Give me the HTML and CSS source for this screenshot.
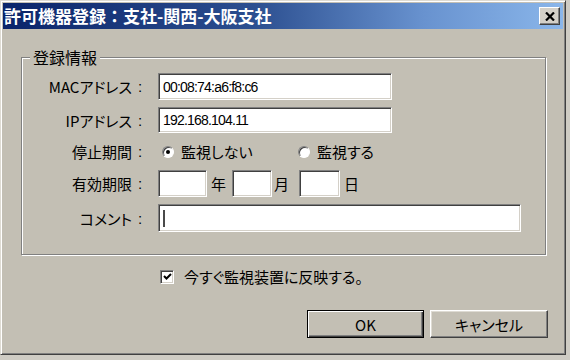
FILE: index.html
```html
<!DOCTYPE html>
<html lang="ja">
<head>
  <meta charset="UTF-8" />
  <title>許可機器登録</title>
  <link rel="stylesheet" href="styles.css">
</head>
<body>
  <div class="window">
    <div class="titlebar">
      <span class="title">許可機器登録：支社-関西-大阪支社</span>
      <button class="close-btn" aria-label="閉じる">
        <svg width="10" height="9" viewBox="0 0 10 9">
          <path d="M1 0.5 L9 8.5 M9 0.5 L1 8.5" stroke="#000" stroke-width="2.2" fill="none"/>
        </svg>
      </button>
    </div>

    <div class="content">
      <fieldset class="group">
        <legend>登録情報</legend>
        <div class="form">
          <div class="label">MACアドレス<span class="colon">:</span></div>
          <div class="field field-mid">00:08:74:a6:f8:c6</div>

          <div class="label">IPアドレス<span class="colon">:</span></div>
          <div class="field field-mid">192.168.104.11</div>

          <div class="label">停止期間<span class="colon">:</span></div>
          <div class="radios">
            <label class="option option-first"><span class="radio checked"></span>監視しない</label>
            <label class="option"><span class="radio"></span>監視する</label>
          </div>

          <div class="label">有効期限<span class="colon">:</span></div>
          <div class="dates">
            <div class="field date-y"></div><span class="unit unit-y">年</span>
            <div class="field date-m"></div><span class="unit unit-m">月</span>
            <div class="field date-d"></div><span class="unit">日</span>
          </div>

          <div class="label">コメント<span class="colon">:</span></div>
          <div class="field field-wide"><span class="caret"></span></div>
        </div>
      </fieldset>

      <label class="check-row">
        <span class="checkbox">
          <svg width="9" height="9" viewBox="0 0 9 9">
            <path d="M1 4 L3.5 6.5 L8 2" stroke="#000" stroke-width="2" fill="none"/>
          </svg>
        </span>
        今すぐ監視装置に反映する。
      </label>

      <div class="buttons">
        <button class="btn btn-default">OK</button>
        <button class="btn">キャンセル</button>
      </div>
    </div>
  </div>
</body>
</html>
```

FILE: styles.css
```css
/* Reset */
* {
  box-sizing: border-box;
}
html, body {
  margin: 0;
  padding: 0;
}
body {
  width: 570px;
  height: 360px;
  overflow: hidden;
  background: #cfccc4;
  font-family: "Noto Sans CJK JP", "Noto Sans", sans-serif;
  font-size: 15px;
  font-feature-settings: "palt";
  color: #000;
}

/* Window frame */
.window {
  width: 566px;
  height: 355px;
  background: #c3bfb4;
  border: 1px solid;
  border-color: #dedbd3 #404040 #404040 #dedbd3;
  box-shadow: inset 1px 1px #fff, inset -1px -1px #808080;
  padding: 2px;
}

.titlebar {
  height: 26px;
  display: flex;
  align-items: center;
  padding-left: 1px;
  background: linear-gradient(to right, #0a246a 0%, #2c4f90 45%, #6892cf 75%, #8ab6ea 100%);
}
.title {
  color: #fff;
  font-weight: 700;
  font-size: 17px;
  line-height: 26px;
  font-feature-settings: normal;
  white-space: nowrap;
}
.close-btn {
  margin-left: auto;
  margin-right: 3px;
  width: 21px;
  height: 18px;
  padding: 0;
  display: flex;
  align-items: center;
  justify-content: center;
  background: #d4d0c8;
  border: 1px solid;
  border-color: #fff #404040 #404040 #fff;
  box-shadow: inset -1px -1px #808080;
}

/* Body */
.content {
  padding: 18px 0 0 18px;
}

.group {
  width: 525px;
  margin: 0;
  padding: 0;
  border: 1px solid #808080;
  box-shadow: inset 1px 1px #fff, 1px 1px #fff;
}
.group legend {
  margin-left: 8px;
  padding: 0 3px;
  font-size: 16px;
  line-height: 20px;
  background: #c3bfb4;
}

.form {
  display: grid;
  grid-template-columns: 118px auto;
  grid-template-rows: 27px 26px 23px 27px 28px;
  column-gap: 10px;
  row-gap: 7px;
  padding: 6px 0 22px 8px;
}
.label {
  display: flex;
  align-items: center;
  justify-content: flex-end;
  white-space: nowrap;
}
.colon {
  width: 16px;
  text-align: center;
  font-family: "Liberation Sans", sans-serif;
}

/* Sunken edit boxes */
.field {
  height: 100%;
  background: #fff;
  border: 1px solid;
  border-color: #808080 #fff #fff #808080;
  box-shadow: inset 1px 1px #404040, inset -1px -1px #d4d0c8;
  padding-left: 4px;
  display: flex;
  align-items: center;
  font-family: "Liberation Sans", sans-serif;
  font-size: 14px;
  letter-spacing: -0.8px;
}
.field-mid {
  width: 234px;
}
.field-wide {
  width: 363px;
}
.caret {
  width: 2px;
  height: 17px;
  background: #4a4a4a;
}

/* Radio buttons */
.radios {
  display: flex;
  align-items: center;
  padding-left: 4px;
}
.option {
  display: flex;
  align-items: center;
  gap: 7px;
}
.option-first {
  width: 136px;
}
.radio {
  width: 12px;
  height: 12px;
  border-radius: 50%;
  background: #fff;
  border: 1px solid;
  border-color: #808080 #fff #fff #808080;
  box-shadow: inset 1px 1px #404040;
  display: flex;
  align-items: center;
  justify-content: center;
}
.radio.checked::after {
  content: "";
  width: 4px;
  height: 4px;
  border-radius: 50%;
  background: #000;
}

/* Dates */
.dates {
  display: flex;
  align-items: center;
}
.date-y {
  width: 49px;
  margin-right: 4px;
}
.date-m {
  width: 40px;
  margin-right: 2px;
}
.date-d {
  width: 41px;
  margin-right: 4px;
}
.unit-y {
  margin-right: 6px;
}
.unit-m {
  margin-right: 10px;
}

/* Checkbox */
.check-row {
  display: flex;
  align-items: center;
  gap: 10px;
  height: 17px;
  margin: 13px 0 0 139px;
}
.checkbox {
  width: 14px;
  height: 14px;
  background: #fff;
  border: 1px solid;
  border-color: #808080 #fff #fff #808080;
  box-shadow: inset 1px 1px #404040, inset -1px -1px #d4d0c8;
  display: flex;
  align-items: center;
  justify-content: center;
}

/* Buttons */
.buttons {
  display: flex;
  justify-content: flex-end;
  gap: 6px;
  margin-top: 25px;
  padding-right: 15px;
}
.btn {
  width: 118px;
  height: 28px;
  padding: 0;
  font-family: "Noto Sans CJK JP", "Noto Sans", sans-serif;
  font-size: 15px;
  font-feature-settings: "palt";
  color: #000;
  background: #c3bfb4;
  border: 1px solid;
  border-color: #fff #404040 #404040 #fff;
  box-shadow: inset -1px -1px #808080, inset 1px 1px #dedbd3;
}
.btn-default {
  width: 117px;
  border: 1px solid #000;
  box-shadow: inset 1px 1px #fff, inset -1px -1px #404040, inset -2px -2px #808080;
}
```
